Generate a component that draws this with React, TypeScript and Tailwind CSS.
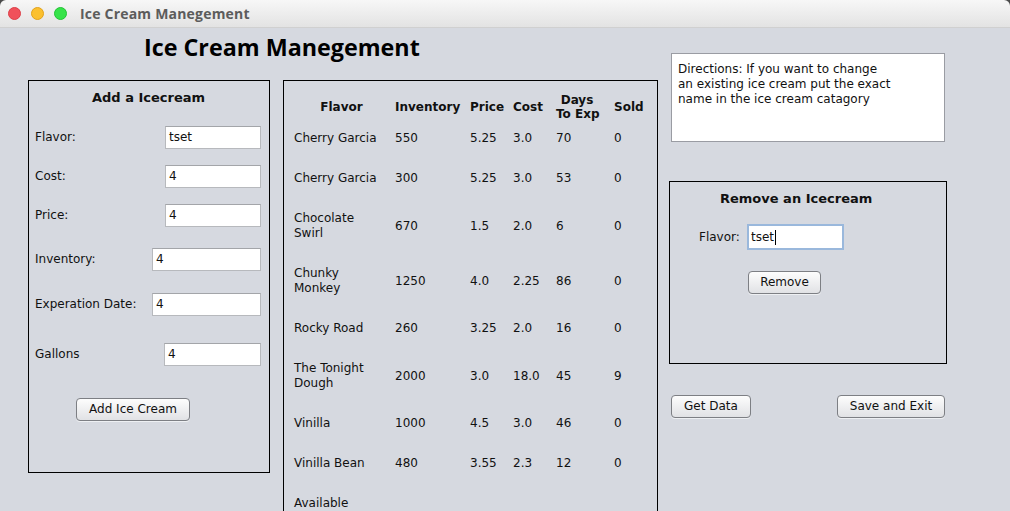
import React from "react";

type Row = { flavor: string[]; inv: string; price: string; cost: string; days: string; sold: string };

const rows: Row[] = [
  { flavor: ["Cherry Garcia"], inv: "550", price: "5.25", cost: "3.0", days: "70", sold: "0" },
  { flavor: ["Cherry Garcia"], inv: "300", price: "5.25", cost: "3.0", days: "53", sold: "0" },
  { flavor: ["Chocolate", "Swirl"], inv: "670", price: "1.5", cost: "2.0", days: "6", sold: "0" },
  { flavor: ["Chunky", "Monkey"], inv: "1250", price: "4.0", cost: "2.25", days: "86", sold: "0" },
  { flavor: ["Rocky Road"], inv: "260", price: "3.25", cost: "2.0", days: "16", sold: "0" },
  { flavor: ["The Tonight", "Dough"], inv: "2000", price: "3.0", cost: "18.0", days: "45", sold: "9" },
  { flavor: ["Vinilla"], inv: "1000", price: "4.5", cost: "3.0", days: "46", sold: "0" },
  { flavor: ["Vinilla Bean"], inv: "480", price: "3.55", cost: "2.3", days: "12", sold: "0" },
  { flavor: ["Available"], inv: "", price: "", cost: "", days: "", sold: "" },
];

// column template shared by the header and the data rows
const cols = "grid grid-cols-[101px_75px_43px_43px_58px_1fr] items-center";

function SwingButton({ label, className = "" }: { label: string; className?: string }) {
  return (
    <button
      className={`h-[23px] rounded-[4px] border border-[#7d7f84] bg-linear-to-b from-[#fdfdfd] to-[#e1e2e5] text-[12px] leading-[15px] text-[#111] shadow-[0_1px_0_#eef0f3] ${className}`}
    >
      {label}
    </button>
  );
}

function Field({ label, value, inputW, mt }: { label: string; value: string; inputW: string; mt: string }) {
  return (
    <div className={`flex items-center justify-between ${mt}`}>
      <span className="leading-[15px]">{label}</span>
      <div
        className={`${inputW} h-[23px] border border-[#b7b9bd] border-t-[#a3a5a9] bg-white pl-[3px] leading-[21px]`}
      >
        {value}
      </div>
    </div>
  );
}

export default function App() {
  return (
    <div className="w-[1010px] h-[511px] overflow-hidden bg-[#4a4a4a] font-['DejaVu_Sans',sans-serif] text-[12px] text-[#111]">
      {/* window title bar */}
      <div className="h-[28px] rounded-t-[6px] bg-linear-to-b from-[#f7f7f7] to-[#e3e3e3] flex items-center pl-[8px] border-b border-[#d0d0d0]">
        <div className="flex items-center gap-[10px]">
          <span className="w-[13px] h-[13px] rounded-full bg-[#f0515a] border border-[#dd3f48]" />
          <span className="w-[13px] h-[13px] rounded-full bg-[#fbc02f] border border-[#e2a21a]" />
          <span className="w-[13px] h-[13px] rounded-full bg-[#37e34a] border border-[#22c434]" />
        </div>
        <span className="ml-[13px] font-['Open_Sans',sans-serif] font-bold text-[14px] text-[#5c5c5c] tracking-[0.2px]">
          Ice Cream Manegement
        </span>
      </div>

      <div className="h-[483px] bg-[#d6d9e0] flex items-start pl-[28px]">
        {/* left + middle */}
        <div className="flex flex-col w-[630px]">
          <div className="h-[52px] pl-[116px] pt-[4px]">
            <h1 className="font-['Open_Sans',sans-serif] font-bold text-[23.3px] leading-[30px] text-black">
              Ice Cream Manegement
            </h1>
          </div>

          <div className="flex gap-[13px]">
            {/* Add panel */}
            <div className="w-[242px] h-[393px] border border-black pl-[6px] pr-[8px] pt-[9px]">
              <div className="pl-[57px] font-bold text-[13px] leading-[16px]">Add a Icecream</div>
              <Field label="Flavor:" value="tset" inputW="w-[96px]" mt="mt-[20px]" />
              <Field label="Cost:" value="4" inputW="w-[96px]" mt="mt-[16px]" />
              <Field label="Price:" value="4" inputW="w-[96px]" mt="mt-[16px]" />
              <Field label="Inventory:" value="4" inputW="w-[109px]" mt="mt-[21px]" />
              <Field label="Experation Date:" value="4" inputW="w-[109px]" mt="mt-[22px]" />
              <Field label="Gallons" value="4" inputW="w-[97px]" mt="mt-[27px]" />
              <div className="mt-[32px] pl-[41px]">
                <SwingButton label="Add Ice Cream" className="w-[114px]" />
              </div>
            </div>

            {/* table panel */}
            <div className="w-[375px] h-[450px] border border-black pl-[10px] pt-[12px]">
              <div className={`${cols} font-bold leading-[14px]`}>
                <span className="text-center pr-[6px]">Flavor</span>
                <span>Inventory</span>
                <span>Price</span>
                <span>Cost</span>
                <span className="w-[42px] text-center whitespace-nowrap">
                  Days
                  <br />
                  To Exp
                </span>
                <span>Sold</span>
              </div>
              <div className="flex flex-col gap-[25px] mt-[10px]">
                {rows.map((r, i) => (
                  <div key={i} className={`${cols} leading-[15px]`}>
                    <span>
                      {r.flavor.map((f, j) => (
                        <span key={j} className="block">
                          {f}
                        </span>
                      ))}
                    </span>
                    <span>{r.inv}</span>
                    <span>{r.price}</span>
                    <span>{r.cost}</span>
                    <span>{r.days}</span>
                    <span>{r.sold}</span>
                  </div>
                ))}
              </div>
            </div>
          </div>
        </div>

        {/* right column */}
        <div className="ml-[11px] mt-[25px] w-[278px] flex flex-col">
          <div className="ml-[2px] w-[274px] h-[89px] border border-[#9a9ca3] bg-white pl-[6px] pt-[8px] leading-[15px]">
            Directions: If you want to change
            <br />
            an existing ice cream put the exact
            <br />
            name in the ice cream catagory
          </div>

          <div className="mt-[39px] h-[183px] border border-black pt-[9px]">
            <div className="pl-[50px] font-bold text-[13px] leading-[16px]">Remove an Icecream</div>
            <div className="mt-[17px] pl-[29px] flex items-center">
              <span className="w-[48px] leading-[15px]">Flavor:</span>
              <div className="w-[97px] h-[26px] border-2 border-[#9ab8dc] bg-white pl-[2px] leading-[22px] flex items-center">
                <span>tset</span>
                <span className="ml-[1px] w-[1px] h-[15px] bg-black" />
              </div>
            </div>
            <div className="mt-[21px] pl-[78px]">
              <SwingButton label="Remove" className="w-[73px]" />
            </div>
          </div>

          <div className="mt-[31px] flex justify-between pl-[2px] pr-[2px]">
            <SwingButton label="Get Data" className="w-[80px]" />
            <SwingButton label="Save and Exit" className="w-[108px]" />
          </div>
        </div>
      </div>
    </div>
  );
}
